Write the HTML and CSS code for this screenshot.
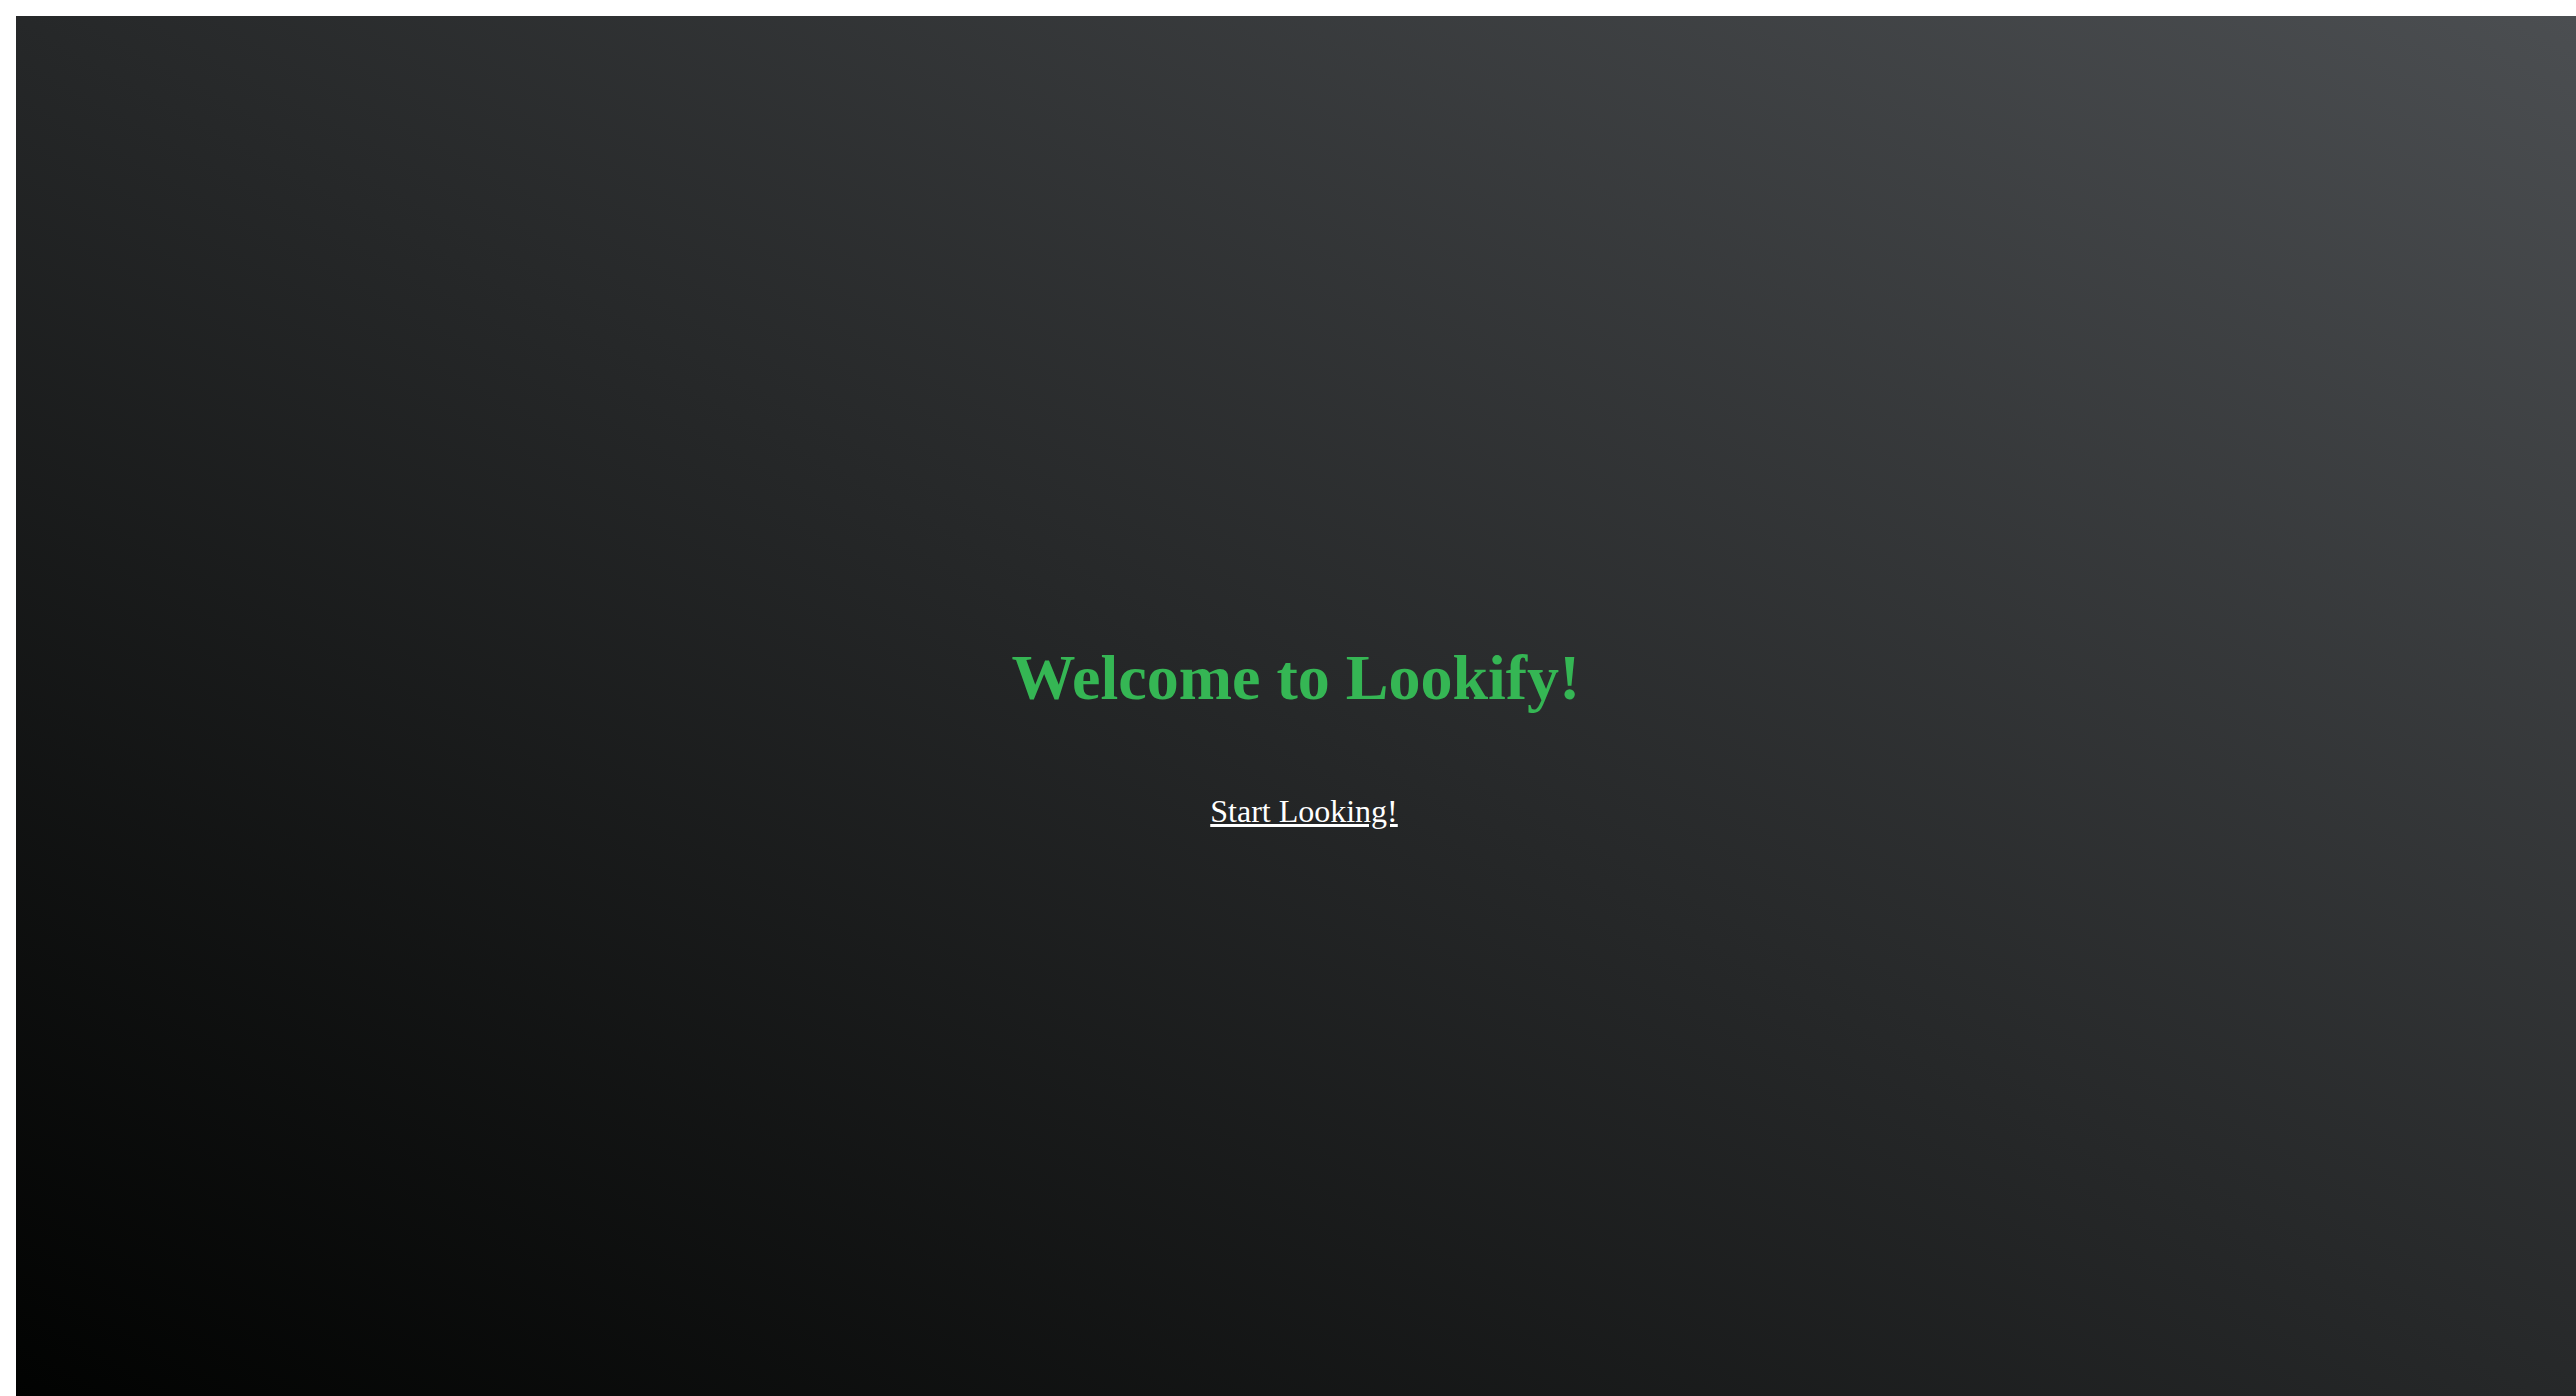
FILE: index.html
```html
<!DOCTYPE html>
<html>
<head>
<meta charset="utf-8">
<title>Lookify</title>
<link rel="stylesheet" href="styles.css">
</head>
<body>
<div class="landing">
  <h1 class="title">Welcome to Lookify!</h1>
  <p class="cta"><a href="#" class="cta-link">Start Looking!</a></p>
</div>
</body>
</html>
```
FILE: styles.css
```css
html {
  overflow: hidden;
  background: #ffffff;
}
body {
  margin: 0;
  padding: 16px 0 0 16px;
  background: #ffffff;
  font-family: "Liberation Serif", "Times New Roman", serif;
}
.landing {
  box-sizing: border-box;
  width: calc(100vw - 16px);
  height: 100vh;
  padding-top: 32px;
  padding-left: 16px;
  display: flex;
  flex-direction: column;
  align-items: center;
  justify-content: center;
  background: linear-gradient(to top right, #010201, #4b4e51);
}
.title {
  font-size: 64px;
  font-weight: bold;
  color: #35b654;
  margin: 43px 0 46px;
  padding-right: 16px;
}
.cta {
  font-size: 32px;
  margin: 32px 0;
}
.cta-link {
  color: #ffffff;
  text-decoration: underline;
}
```
